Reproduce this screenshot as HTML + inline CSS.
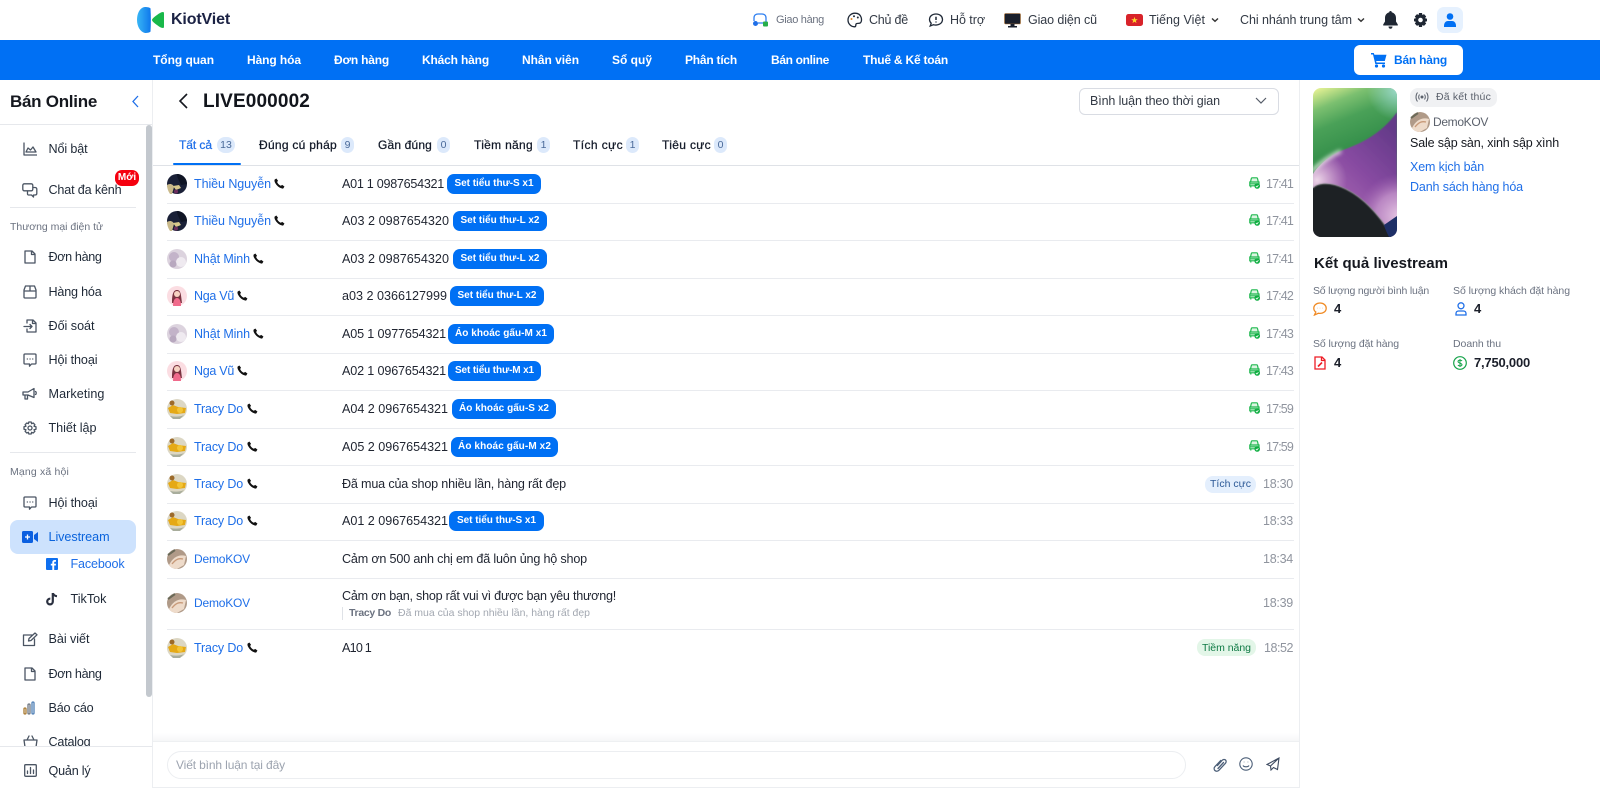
<!DOCTYPE html>
<html lang="vi"><head><meta charset="utf-8"><title>KiotViet</title>
<style>
*{box-sizing:border-box}
html,body{margin:0;padding:0;width:1600px;height:788px;overflow:hidden;background:#fff}
body{position:relative;font-family:"Liberation Sans","Noto Sans CJK SC",sans-serif;color:#1b1f2a}
.t{position:absolute;height:20px;line-height:20px;white-space:nowrap;font-size:13px}
.a{position:absolute}
.m{-webkit-text-stroke:.25px currentColor}
.b{font-weight:bold}
.n{color:#fff;font-weight:bold;font-size:12px;top:50px}
.h{color:#333a45;top:10px;font-size:12.5px}
.s{font-size:12.6px;color:#1f2937}
.g{font-size:10.5px;color:#6b7280}
.i{position:absolute;fill:none;stroke:#4b5563;stroke-width:1.3;stroke-linecap:round;stroke-linejoin:round}
.tb{top:135px;font-size:12px;color:#111827}
.bd{position:absolute;top:137px;height:16px;border-radius:8px;background:#dce9fb;color:#4a6a99;font-size:10.5px;line-height:16px;text-align:center}
.r{position:absolute;left:0;top:0;width:1299px;height:20px}
.l{position:absolute;left:167px;width:1127px;height:1px;background:#e9ebef}
.nm{left:194px;color:#1f6fe8;font-size:12.5px}
.dk{font-size:12px}
.tx{left:342px;color:#1f2430;font-size:12.6px}
.tm{left:1266px;color:#8f949e;font-size:12.5px}
.ch{position:absolute;top:0;height:20px;background:#0070f4;border-radius:7px;color:#fff;font-weight:bold;font-size:10px;line-height:20px;text-align:center;white-space:nowrap}
.ch span{display:inline-block}
.lb{font-size:10.5px;color:#6b7280}
.v{font-size:13px;font-weight:bold;color:#1b1f2a}
</style></head><body>
<svg width="0" height="0" style="position:absolute"><defs>
<symbol id="ph" viewBox="0 0 12 12"><path fill="#111" d="M2.600.6 4.400 3 3.400 4.400C4 6 5.800 7.900 7.500 8.500L8.900 7.500 11.400 9.300 10.300 11.200C9.700 11.700 8.700 11.600 7.600 11.100 4.500 9.800 2 7.200.8 4.300.4 3.200.4 2.300.8 1.700Z"/></symbol>
<symbol id="car" viewBox="0 0 11 12"><path fill="#dcf5e2" stroke="#1fb84f" stroke-width="1.200" d="M1.500 5 2.300 1.500C2.400 1 2.800.8 3.200.8H7.600C8 .8 8.400 1 8.500 1.500L9.300 5M.8 5H10V8.800H.8ZM1.800 9V10.500M.9 6.800H9.900"/><circle cx="8.200" cy="9" r="2.800" fill="#0fae42"/><path d="M6.900 9 7.900 10 9.400 8.200" stroke="#fff" stroke-width=".8" fill="none"/></symbol>
<symbol id="av1" viewBox="0 0 20 20"><circle cx="10" cy="10" r="10" fill="#1a2037"/><path d="M0 11C3 9 6 10 7 13L5 20H3C1 17 0 14 0 11Z" fill="#c9b98a"/><path d="M6 12 12 11 14 14 9 16Z" fill="#d8c98c"/><circle cx="9" cy="17.500" r="2" fill="#6b2d5c"/><path d="M10 0C15 0 20 4 20 10L14 11C12 6 10 4 10 0Z" fill="#0f1424"/></symbol>
<symbol id="av2" viewBox="0 0 20 20"><circle cx="10" cy="10" r="10" fill="#dcd3de"/><circle cx="7" cy="8" r="5" fill="#c3b3c9"/><circle cx="14" cy="13" r="5" fill="#efeaf0"/><circle cx="6" cy="15" r="3.500" fill="#b8a8bf"/></symbol>
<symbol id="av3" viewBox="0 0 20 20"><circle cx="10" cy="10" r="10" fill="#fbdde2"/><path d="M5 17C5 9 6 4 10 4S14 9 15 17Z" fill="#7a3340"/><circle cx="10" cy="8" r="3" fill="#f7d2c2"/><path d="M6 20C6 14 8 12 10 12S14 14 14 20Z" fill="#f06a8b"/></symbol>
<symbol id="av4" viewBox="0 0 20 20"><circle cx="10" cy="10" r="10" fill="#dcd7c4"/><path d="M1 9 6 6 11 8 19 9 18 14 10 15 3 14Z" fill="#e5a916"/><circle cx="13" cy="11" r="3" fill="#f3c536"/><circle cx="5" cy="4" r="2.500" fill="#9c6a2a"/><path d="M3 17C8 18 13 18 17 16L13 20H6Z" fill="#a8ad9c"/></symbol>
<symbol id="av5" viewBox="0 0 20 20"><circle cx="10" cy="10" r="10" fill="#b09a88"/><path d="M2 16C6 8 12 5 19 7L17 16 10 20C7 20 4 19 2 16Z" fill="#eedbca"/><path d="M5 15C9 10 12 9 16 10" stroke="#c89a79" stroke-width="1.400" fill="none"/><path d="M1 6 8 1" stroke="#6b6a58" stroke-width="2"/></symbol>
</defs></svg>

<!-- header -->
<svg class="a" style="left:137px;top:7px" width="27" height="26" viewBox="0 0 27 26"><defs><linearGradient id="lb" x1="0" x2="1"><stop offset="0" stop-color="#39b6f5"/><stop offset="1" stop-color="#0f78ec"/></linearGradient></defs><path fill="url(#lb)" d="M8 0C10.500 0 13 .5 13.500 1.500 14 9 14 17 13.500 24.500 13 25.500 10.500 26 8 26 3 25 0 19 0 13 0 6 3 .5 8 0Z"/><path fill="#19b84a" d="M15 13C15 12 17 10 20 8 22 6.500 24 5 26 5 27 5 27 6 27 7V19C27 20 27 21 26 21 24 21 22 19.500 20 18 17 16 15 14 15 13Z"/></svg>
<div class="t b" style="left:171px;top:10px;font-size:16px;color:#1b2244" w="59">KiotViet</div>

<svg class="a" style="left:752px;top:12px" width="17" height="16" viewBox="0 0 17 16" fill="none"><path d="M2 9V6C2 3 4 2 6 2H10C12 2 14 3 14 6V11H6" stroke="#2f7ff0" stroke-width="1.300"/><circle cx="3.500" cy="11.500" r="2.500" fill="#1f6fe8"/><rect x="11" y="9.500" width="5" height="5" rx="1" fill="#27ae4a"/></svg>
<div class="t" style="left:776px;top:10px;font-size:11px;color:#6b7280" w="48">Giao hàng</div>
<svg class="a" style="left:847px;top:12px" width="16" height="16" viewBox="0 0 16 16" fill="none" stroke="#1f2937" stroke-width="1.300"><path d="M8 1.200C4 1.200 1 4.200 1 8S4 14.800 7.500 14.800C9.500 14.800 8.500 12.800 9 12 9.700 10.800 11.800 12 13.500 10.800 15.500 9 15 1.200 8 1.200Z"/><circle cx="4.500" cy="7" r="1" fill="#e08a2a" stroke="none"/><circle cx="7" cy="4.300" r="1" fill="#1f2937" stroke="none"/><circle cx="10.800" cy="5.500" r="1" fill="#1f2937" stroke="none"/></svg>
<div class="t h" style="left:869px" w="39">Chủ đề</div>
<svg class="a" style="left:928px;top:12px" width="16" height="16" viewBox="0 0 16 16" fill="none" stroke="#1f2937" stroke-width="1.300"><path d="M8 2C4 2 1.500 4.500 1.500 7.500 1.500 9 2.200 10.300 3.200 11.200L2.200 14 5.500 12.700C10 14 14.500 11.500 14.500 7.500 14.500 4.500 12 2 8 2Z"/><path d="M8 4.800V8M8 9.500V10.500" stroke-width="1.500"/></svg>
<div class="t h" style="left:950px" w="35">Hỗ trợ</div>
<svg class="a" style="left:1004px;top:13px" width="17" height="15" viewBox="0 0 17 15"><rect x=".5" y=".5" width="16" height="10.500" rx="1" fill="#1a1f2b" stroke="#b5793a" stroke-width=".6"/><rect x="6.500" y="11" width="4" height="2.500" fill="#1a1f2b"/><rect x="4" y="13" width="9" height="1.500" fill="#1a1f2b"/></svg>
<div class="t h" style="left:1028px" w="69">Giao diện cũ</div>
<svg class="a" style="left:1126px;top:14px" width="17" height="12" viewBox="0 0 17 12"><rect width="17" height="12" rx="2.500" fill="#d8232a"/><path fill="#ffd92e" d="M8.500 2.800 9.300 5.200H11.800L9.800 6.700 10.500 9.100 8.500 7.600 6.500 9.100 7.200 6.700 5.200 5.200H7.700Z"/></svg>
<div class="t h" style="left:1149px" w="56">Tiếng Việt</div>
<svg class="a" style="left:1211px;top:17px" width="8" height="6" viewBox="0 0 8 6" fill="none" stroke="#333" stroke-width="1.400"><path d="M1 1.500 4 4.300 7 1.500"/></svg>
<div class="t h" style="left:1240px" w="112">Chi nhánh trung tâm</div>
<svg class="a" style="left:1357px;top:17px" width="8" height="6" viewBox="0 0 8 6" fill="none" stroke="#333" stroke-width="1.400"><path d="M1 1.500 4 4.300 7 1.500"/></svg>
<svg class="a" style="left:1383px;top:11px" width="15" height="18" viewBox="0 0 15 18"><path fill="#1f2733" d="M7.500 0C8.300 0 8.800.6 8.800 1.400 11.500 2 13 4.300 13 7V10.500L14.800 13.500V14.500H.2V13.500L2 10.500V7C2 4.300 3.500 2 6.200 1.400 6.200.6 6.700 0 7.500 0ZM5.500 15.500H9.500C9.500 17 8.500 17.800 7.500 17.800S5.500 17 5.500 15.500Z"/></svg>
<svg class="a" style="left:1414px;top:13px" width="13" height="14" viewBox="0 0 13 14"><path fill="#1f2733" fill-rule="evenodd" d="M5 0H8L8.400 2 10 1.100 12.200 3.500 11 5.100 13 5.700V8.300L11 8.900 12.200 10.500 10 12.900 8.400 12 8 14H5L4.600 12 3 12.900.8 10.500 2 8.900 0 8.300V5.700L2 5.100.8 3.500 3 1.100 4.600 2ZM6.500 4.700A2.300 2.300 0 1 0 6.500 9.300 2.300 2.300 0 1 0 6.500 4.700Z"/></svg>
<div class="a" style="left:1437px;top:7px;width:26px;height:26px;border-radius:7px;background:#e6f1fe"></div>
<svg class="a" style="left:1444px;top:13px" width="12" height="14" viewBox="0 0 12 14"><circle cx="6" cy="3.500" r="3.300" fill="#0070f4"/><path fill="#0070f4" d="M0 13C0 9.500 2 8 4 8H8C10 8 12 9.500 12 13V14H0Z"/></svg>

<!-- nav -->
<div class="a" style="left:0;top:40px;width:1600px;height:40px;background:#0070f4"></div>
<div class="t n" style="left:153px" w="61">Tổng quan</div>
<div class="t n" style="left:247px" w="54">Hàng hóa</div>
<div class="t n" style="left:334px" w="55">Đơn hàng</div>
<div class="t n" style="left:422px" w="67">Khách hàng</div>
<div class="t n" style="left:522px" w="57">Nhân viên</div>
<div class="t n" style="left:612px" w="40">Sổ quỹ</div>
<div class="t n" style="left:685px" w="52">Phân tích</div>
<div class="t n" style="left:771px" w="58">Bán online</div>
<div class="t n" style="left:863px" w="85">Thuế &amp; Kế toán</div>
<div class="a" style="left:1354px;top:45px;width:109px;height:30px;background:#fff;border-radius:6px"></div>
<svg class="a" style="left:1371px;top:53px" width="16" height="15" viewBox="0 0 16 15"><path fill="#0070f4" d="M0 0H2.800L3.400 1.800H15.500L13.800 8H5.200L5.500 9.500H14V11H4.300L2 1.500H0Z"/><circle cx="5.500" cy="13" r="1.600" fill="#0070f4"/><circle cx="12.500" cy="13" r="1.600" fill="#0070f4"/></svg>
<div class="t b" style="left:1394px;top:50px;font-size:12px;color:#0070f4" w="53">Bán hàng</div>

<!-- sidebar -->
<div class="t b" style="left:10px;top:92px;font-size:17px;color:#15181f" w="87">Bán Online</div>
<svg class="a" style="left:131px;top:95px" width="9" height="13" viewBox="0 0 9 13" fill="none" stroke="#1f6fe8" stroke-width="1.300"><path d="M7 1 2 6.500 7 12"/></svg>
<div class="a" style="left:0;top:124px;width:152px;height:1px;background:#e6e8ec"></div>
<div class="a" style="left:152px;top:80px;width:1px;height:708px;background:#eceef1"></div>
<div class="a" style="left:146px;top:125px;width:6px;height:572px;background:#c3c8ce;border-radius:3px"></div>

<svg class="i" style="left:23px;top:142px" width="14" height="14" viewBox="0 0 14 14"><path d="M1 1V13H14M3 10 5 6 7.500 8 10 5 13 10Z"/></svg>
<div class="t s" style="left:48.500px;top:139px" w="39">Nổi bật</div>
<svg class="i" style="left:22px;top:183px" width="16" height="15" viewBox="0 0 16 15"><rect x=".8" y=".8" width="10" height="7" rx="1.500"/><path d="M5.500 8V11C5.500 11.500 6 12 6.500 12H9.500L11.500 14V12H13C14 12 14.800 11.500 14.800 10.500V6C14.800 5 14 4.500 13 4.500H11"/></svg>
<div class="t s" style="left:48.500px;top:180px" w="73">Chat đa kênh</div>
<div class="a" style="left:115px;top:170px;width:24px;height:16px;border-radius:7px;background:#f5000f;color:#fff;font-size:10px;font-weight:bold;line-height:15px;text-align:center">Mới</div>
<div class="a" style="left:10px;top:207px;width:126px;height:1px;background:#e6e8ec"></div>
<div class="t g" style="left:10px;top:217px" w="93">Thương mại điện tử</div>
<svg class="i" style="left:24px;top:250px" width="12" height="14" viewBox="0 0 12 14"><path d="M1 1H8L11 4V13H1ZM7.500 1V4.500H11"/></svg>
<div class="t s" style="left:48.500px;top:247px" w="53">Đơn hàng</div>
<svg class="i" style="left:23px;top:285px" width="14" height="14" viewBox="0 0 14 14"><path d="M1 5V12C1 12.800 1.500 13 2 13H12C12.500 13 13 12.800 13 12V5L11.500 1H2.500ZM1 6H13M7 1V6"/></svg>
<div class="t s" style="left:48.500px;top:282px" w="53">Hàng hóa</div>
<svg class="i" style="left:23px;top:319px" width="15" height="14" viewBox="0 0 15 14"><path d="M4 4V1H10L13 4V13H4V10M9.500 1V4.500H13M1 7.500H9M7 5.500 9 7.500 7 9.500"/></svg>
<div class="t s" style="left:48.500px;top:316px" w="46">Đối soát</div>
<svg class="i" style="left:23px;top:353px" width="14" height="14" viewBox="0 0 14 14"><path d="M2 1H12C12.600 1 13 1.400 13 2V10C13 10.600 12.600 11 12 11H8.500L6.500 13.200V11H2C1.400 11 1 10.600 1 10V2C1 1.400 1.400 1 2 1ZM4.300 6H4.400M7 6H7.100M9.700 6H9.800"/></svg>
<div class="t s" style="left:48.500px;top:350px" w="49">Hội thoại</div>
<svg class="i" style="left:22px;top:387px" width="16" height="14" viewBox="0 0 16 14"><path d="M1 5H6L12 1.500V10.500L6 8H1ZM3 8V12H5.500V8.500M13.500 4.500C14.500 5 14.500 7 13.500 7.500"/></svg>
<div class="t s" style="left:48.500px;top:384px" w="56">Marketing</div>
<svg class="i" style="left:23px;top:421px" width="14" height="14" viewBox="0 0 14 14"><circle cx="7" cy="7" r="2"/><path d="M5.800 1H8.200L8.600 2.700 10.200 2 11.900 3.700 11 5.200 13 5.800V8.200L11 8.800 11.900 10.300 10.200 12 8.600 11.300 8.200 13H5.800L5.400 11.300 3.800 12 2.100 10.300 3 8.800 1 8.200V5.800L3 5.200 2.100 3.700 3.800 2 5.400 2.700Z"/></svg>
<div class="t s" style="left:48.500px;top:418px" w="48">Thiết lập</div>
<div class="a" style="left:10px;top:452px;width:126px;height:1px;background:#e6e8ec"></div>
<div class="t g" style="left:10px;top:462px" w="59">Mạng xã hội</div>
<svg class="i" style="left:23px;top:496px" width="14" height="14" viewBox="0 0 14 14"><path d="M2 1H12C12.600 1 13 1.400 13 2V10C13 10.600 12.600 11 12 11H8.500L6.500 13.200V11H2C1.400 11 1 10.600 1 10V2C1 1.400 1.400 1 2 1ZM4.300 6H4.400M7 6H7.100M9.700 6H9.800"/></svg>
<div class="t s" style="left:48.500px;top:493px" w="49">Hội thoại</div>
<div class="a" style="left:10px;top:520px;width:126px;height:34px;background:#cde2fd;border-radius:8px"></div>
<svg class="a" style="left:22px;top:531px" width="16" height="12" viewBox="0 0 16 12"><rect width="11" height="12" rx="1.500" fill="#0b5fe0"/><path d="M5.500 3.500V8.500M3 6H8" stroke="#fff" stroke-width="1.300"/><path d="M12 4 16 1V11L12 8Z" fill="#0b5fe0"/></svg>
<div class="t s" style="left:48.500px;top:527px;color:#0a63dc" w="61">Livestream</div>
<svg class="a" style="left:46px;top:558px" width="12" height="12" viewBox="0 0 12 12"><rect width="12" height="12" rx="1" fill="#0f6fef"/><path fill="#fff" d="M8.200 12V7.500H9.800L10 5.700H8.200V4.600C8.200 4 8.500 3.700 9.100 3.700H10V2.100C9.600 2 9.100 2 8.700 2 7.200 2 6.300 2.900 6.300 4.400V5.700H4.800V7.500H6.300V12Z"/></svg>
<div class="t s" style="left:70.500px;top:554px;color:#1f6fe8" w="54">Facebook</div>
<svg class="a" style="left:46px;top:592px" width="12" height="14" viewBox="0 0 12 14" fill="none"><path d="M6.800 1V9.500C6.800 11 5.700 12.400 4 12.400 2.500 12.400 1.200 11.200 1.200 9.500 1.200 8 2.500 6.600 4.300 6.700" stroke="#2b3140" stroke-width="2.200"/><path d="M7 1.200C7.500 3 9 4 11 4.200" stroke="#2b3140" stroke-width="2"/></svg>
<div class="t s" style="left:70.500px;top:589px" w="36">TikTok</div>
<svg class="i" style="left:22px;top:632px" width="16" height="15" viewBox="0 0 16 15"><path d="M10 3H1.500V13.500H12.500V7M6.500 9 7 6.500 13 1 15 2.800 9 8.500Z"/></svg>
<div class="t s" style="left:48.500px;top:629px" w="41">Bài viết</div>
<svg class="i" style="left:24px;top:667px" width="12" height="14" viewBox="0 0 12 14"><path d="M1 1H8L11 4V13H1ZM7.500 1V4.500H11"/></svg>
<div class="t s" style="left:48.500px;top:664px" w="53">Đơn hàng</div>
<svg class="a" style="left:23px;top:701px" width="14" height="14" viewBox="0 0 14 14" fill="none" stroke="#6d7682" stroke-width="1.300"><rect x="1" y="7" width="2" height="6" rx="1" stroke="#a8792f"/><rect x="5" y="3" width="2" height="10" rx="1"/><rect x="9" y="1" width="2" height="12" rx="1" stroke="#4f7fb5"/></svg>
<div class="t s" style="left:48.500px;top:698px" w="45">Báo cáo</div>
<svg class="i" style="left:23px;top:735px" width="15" height="14" viewBox="0 0 15 14"><path d="M1 5H14L13 12H2ZM4 5 6 1M11 5 9 1"/></svg>
<div class="t s" style="left:48.500px;top:732px" w="42">Catalog</div>
<div class="a" style="left:0;top:746px;width:152px;height:42px;background:#fff;border-top:1px solid #e6e8ec"></div>
<svg class="i" style="left:24px;top:764px" width="13" height="13" viewBox="0 0 13 13"><rect x=".7" y=".7" width="11.600" height="11.600" rx="1"/><path d="M3.500 9.500V7M6.500 9.500V3.500M9.500 9.500V6"/></svg>
<div class="t s" style="left:48.500px;top:761px" w="42">Quản lý</div>

<!-- title -->
<svg class="a" style="left:178px;top:93px" width="11" height="16" viewBox="0 0 11 16" fill="none" stroke="#15181f" stroke-width="1.600"><path d="M9 1 2 8 9 15"/></svg>
<div class="t b" style="left:203px;top:92px;font-size:19px;color:#12151c" w="107">LIVE000002</div>
<div class="a" style="left:1079px;top:88px;width:200px;height:27px;border:1px solid #d9dce3;border-radius:6px"></div>
<div class="t" style="left:1090px;top:91px;font-size:12.500px;color:#333a45" w="130">Bình luận theo thời gian</div>
<svg class="a" style="left:1255px;top:97px" width="12" height="8" viewBox="0 0 12 8" fill="none" stroke="#555c68" stroke-width="1.200"><path d="M1 1 6 6 11 1"/></svg>

<!-- tabs -->
<div class="t tb m" style="left:179px;color:#1f6fe8" w="33">Tất cả</div><div class="bd" style="left:217px;width:18px">13</div>
<div class="t tb m" style="left:259px" w="78">Đúng cú pháp</div><div class="bd" style="left:341px;width:13px">9</div>
<div class="t tb m" style="left:378px" w="54">Gần đúng</div><div class="bd" style="left:437px;width:13px">0</div>
<div class="t tb m" style="left:474px" w="59">Tiềm năng</div><div class="bd" style="left:537px;width:13px">1</div>
<div class="t tb m" style="left:573px" w="50">Tích cực</div><div class="bd" style="left:626px;width:13px">1</div>
<div class="t tb m" style="left:662px" w="49">Tiêu cực</div><div class="bd" style="left:714px;width:13px">0</div>
<div class="a" style="left:153px;top:165px;width:1146px;height:1px;background:#dfe2e7"></div>
<div class="a" style="left:173px;top:163px;width:68px;height:2px;background:#0070f4;border-radius:1px"></div>

<!-- dividers -->
<div class="l" style="top:203px"></div><div class="l" style="top:240px"></div><div class="l" style="top:278px"></div><div class="l" style="top:315px"></div><div class="l" style="top:353px"></div><div class="l" style="top:390px"></div><div class="l" style="top:428px"></div><div class="l" style="top:465px"></div><div class="l" style="top:503px"></div><div class="l" style="top:540px"></div><div class="l" style="top:578px"></div><div class="l" style="top:629px"></div>

<!-- rows -->
<div class="r" style="top:174px"><svg class="a" style="left:167px" width="20" height="20"><use href="#av1"/></svg><div class="t nm" w="77">Thiều Nguyễn</div><svg class="a" style="left:274px;top:4px" width="11" height="11"><use href="#ph"/></svg><div class="t tx" w="102">A01 1 0987654321</div><div class="ch" style="left:447px;width:94px"><span w="79">Set tiểu thư-S x1</span></div><svg class="a" style="left:1249px;top:3px" width="11" height="12"><use href="#car"/></svg><div class="t tm" w="27">17:41</div></div>
<div class="r" style="top:211px"><svg class="a" style="left:167px" width="20" height="20"><use href="#av1"/></svg><div class="t nm" w="77">Thiều Nguyễn</div><svg class="a" style="left:274px;top:4px" width="11" height="11"><use href="#ph"/></svg><div class="t tx" w="107">A03 2 0987654320</div><div class="ch" style="left:453px;width:94px"><span w="79">Set tiểu thư-L x2</span></div><svg class="a" style="left:1249px;top:3px" width="11" height="12"><use href="#car"/></svg><div class="t tm" w="27">17:41</div></div>
<div class="r" style="top:249px"><svg class="a" style="left:167px" width="20" height="20"><use href="#av2"/></svg><div class="t nm" w="56">Nhật Minh</div><svg class="a" style="left:253px;top:4px" width="11" height="11"><use href="#ph"/></svg><div class="t tx" w="107">A03 2 0987654320</div><div class="ch" style="left:453px;width:94px"><span w="79">Set tiểu thư-L x2</span></div><svg class="a" style="left:1249px;top:3px" width="11" height="12"><use href="#car"/></svg><div class="t tm" w="27">17:41</div></div>
<div class="r" style="top:286px"><svg class="a" style="left:167px" width="20" height="20"><use href="#av3"/></svg><div class="t nm" w="40">Nga Vũ</div><svg class="a" style="left:237px;top:4px" width="11" height="11"><use href="#ph"/></svg><div class="t tx" w="105">a03 2 0366127999</div><div class="ch" style="left:450px;width:94px"><span w="79">Set tiểu thư-L x2</span></div><svg class="a" style="left:1249px;top:3px" width="11" height="12"><use href="#car"/></svg><div class="t tm" w="27">17:42</div></div>
<div class="r" style="top:324px"><svg class="a" style="left:167px" width="20" height="20"><use href="#av2"/></svg><div class="t nm" w="56">Nhật Minh</div><svg class="a" style="left:253px;top:4px" width="11" height="11"><use href="#ph"/></svg><div class="t tx" w="104">A05 1 0977654321</div><div class="ch" style="left:448px;width:106px"><span w="92">Áo khoác gấu-M x1</span></div><svg class="a" style="left:1249px;top:3px" width="11" height="12"><use href="#car"/></svg><div class="t tm" w="27">17:43</div></div>
<div class="r" style="top:361px"><svg class="a" style="left:167px" width="20" height="20"><use href="#av3"/></svg><div class="t nm" w="40">Nga Vũ</div><svg class="a" style="left:237px;top:4px" width="11" height="11"><use href="#ph"/></svg><div class="t tx" w="104">A02 1 0967654321</div><div class="ch" style="left:448px;width:93px"><span w="79">Set tiểu thư-M x1</span></div><svg class="a" style="left:1249px;top:3px" width="11" height="12"><use href="#car"/></svg><div class="t tm" w="27">17:43</div></div>
<div class="r" style="top:399px"><svg class="a" style="left:167px" width="20" height="20"><use href="#av4"/></svg><div class="t nm" w="49">Tracy Do</div><svg class="a" style="left:247px;top:4px" width="11" height="11"><use href="#ph"/></svg><div class="t tx" w="106">A04 2 0967654321</div><div class="ch" style="left:452px;width:104px"><span w="90">Áo khoác gấu-S x2</span></div><svg class="a" style="left:1249px;top:3px" width="11" height="12"><use href="#car"/></svg><div class="t tm" w="27">17:59</div></div>
<div class="r" style="top:437px"><svg class="a" style="left:167px" width="20" height="20"><use href="#av4"/></svg><div class="t nm" w="49">Tracy Do</div><svg class="a" style="left:247px;top:4px" width="11" height="11"><use href="#ph"/></svg><div class="t tx" w="106">A05 2 0967654321</div><div class="ch" style="left:451px;width:107px"><span w="93">Áo khoác gấu-M x2</span></div><svg class="a" style="left:1249px;top:3px" width="11" height="12"><use href="#car"/></svg><div class="t tm" w="27">17:59</div></div>
<div class="r" style="top:474px"><svg class="a" style="left:167px" width="20" height="20"><use href="#av4"/></svg><div class="t nm" w="49">Tracy Do</div><svg class="a" style="left:247px;top:4px" width="11" height="11"><use href="#ph"/></svg><div class="t tx" w="224">Đã mua của shop nhiều lần, hàng rất đẹp</div><div class="a" style="left:1205px;top:2px;width:51px;height:17px;background:#e4effd;border-radius:8px"></div><div class="t" style="left:1210px;font-size:10.500px;color:#2d5a97" w="41">Tích cực</div><div class="t tm" style="left:1263px" w="30">18:30</div></div>
<div class="r" style="top:511px"><svg class="a" style="left:167px" width="20" height="20"><use href="#av4"/></svg><div class="t nm" w="49">Tracy Do</div><svg class="a" style="left:247px;top:4px" width="11" height="11"><use href="#ph"/></svg><div class="t tx" w="106">A01 2 0967654321</div><div class="ch" style="left:449px;width:95px"><span w="79">Set tiểu thư-S x1</span></div><div class="t tm" style="left:1263px" w="30">18:33</div></div>
<div class="r" style="top:549px"><svg class="a" style="left:167px" width="20" height="20"><use href="#av5"/></svg><div class="t nm dk" w="56">DemoKOV</div><div class="t tx" w="245">Cảm ơn 500 anh chị em đã luôn ủng hộ shop</div><div class="t tm" style="left:1263px" w="30">18:34</div></div>
<div class="r" style="top:593px"><svg class="a" style="left:167px" width="20" height="20"><use href="#av5"/></svg><div class="t nm dk" w="56">DemoKOV</div><div class="t tm" style="left:1263px" w="30">18:39</div></div>
<div class="t tx" style="top:586px" w="274">Cảm ơn bạn, shop rất vui vì được bạn yêu thương!</div>
<div class="a" style="left:342px;top:607px;width:1px;height:13px;background:#dfe2e7"></div>
<div class="t b" style="left:349px;top:603px;font-size:10.500px;color:#6b7280" w="42">Tracy Do</div>
<div class="t" style="left:398px;top:603px;font-size:10.500px;color:#a3a8b1" w="192">Đã mua của shop nhiều lần, hàng rất đẹp</div>
<div class="r" style="top:638px"><svg class="a" style="left:167px" width="20" height="20"><use href="#av4"/></svg><div class="t nm" w="49">Tracy Do</div><svg class="a" style="left:247px;top:4px" width="11" height="11"><use href="#ph"/></svg><div class="t tx" w="29">A10 1</div><div class="a" style="left:1197px;top:1px;width:59px;height:17px;background:#e3f6e8;border-radius:8px"></div><div class="t" style="left:1202px;font-size:10.500px;color:#0f7a45" w="49">Tiềm năng</div><div class="t tm" style="left:1264px" w="29">18:52</div></div>

<!-- composer -->
<div class="a" style="left:153px;top:733px;width:1146px;height:8px;background:linear-gradient(#fff,#f6f7f8)"></div>
<div class="a" style="left:153px;top:741px;width:1146px;height:1px;background:#eef0f2"></div>
<div class="a" style="left:167px;top:751px;width:1019px;height:28px;border:1px solid #eceef1;border-radius:14px"></div>
<div class="t" style="left:176px;top:755px;font-size:12px;color:#9ca3af" w="109">Viết bình luận tại đây</div>
<svg class="a" style="left:1213px;top:758px" width="14" height="14" viewBox="0 0 14 14" fill="none" stroke="#4c5f78" stroke-width="1.300" stroke-linecap="round"><path d="M4.500 7.500 9 2.500C10 1.300 11.600 1.200 12.500 2 13.400 2.900 13.300 4.300 12.300 5.400L6 12.200C4.700 13.500 2.900 13.500 1.900 12.500 .9 11.500 .9 9.800 2 8.600L7.800 2.500"/><path d="M5 10.500 10.500 4.500"/></svg>
<svg class="a" style="left:1239px;top:757px" width="14" height="14" viewBox="0 0 14 14" fill="none" stroke="#4c5f78" stroke-width="1.100"><circle cx="7" cy="7" r="6.200"/><path d="M4 8.500C5 10.300 9 10.300 10 8.500M4.800 5H5.300M8.700 5H9.200"/></svg>
<svg class="a" style="left:1266px;top:757px" width="14" height="14" viewBox="0 0 14 14" fill="none" stroke="#3d4a60" stroke-width="1.100"><path d="M13 1 1 7.500 4.500 9 5 13 7.500 10.500 11.500 12.500ZM13 1 4.500 9"/></svg>
<div class="a" style="left:153px;top:787px;width:1146px;height:1px;background:#eceef1"></div>

<!-- right panel -->
<div class="a" style="left:1299px;top:80px;width:1px;height:708px;background:#eceef1"></div>
<svg class="a" style="left:1313px;top:88px" width="84" height="149" viewBox="0 0 84 149"><defs>
<clipPath id="rc"><rect width="84" height="149" rx="8"/></clipPath>
<clipPath id="pc"><path d="M84 24C70 44 50 55 30 62 15 68 5 78 0 86V149H84Z"/></clipPath>
<linearGradient id="gr" gradientUnits="userSpaceOnUse" x1="5" y1="0" x2="30" y2="60"><stop offset="0" stop-color="#e6f294"/><stop offset=".3" stop-color="#7cc070"/><stop offset=".6" stop-color="#4aa158"/><stop offset="1" stop-color="#37914c"/></linearGradient>
<radialGradient id="tl" gradientUnits="userSpaceOnUse" cx="84" cy="2" r="30"><stop offset="0" stop-color="#9ad8c8"/><stop offset="1" stop-color="#9ad8c8" stop-opacity="0"/></radialGradient>
<linearGradient id="pu" gradientUnits="userSpaceOnUse" x1="10" y1="110" x2="80" y2="40"><stop offset="0" stop-color="#a866b2"/><stop offset=".5" stop-color="#8549a0"/><stop offset="1" stop-color="#633a88"/></linearGradient>
<radialGradient id="pk" gradientUnits="userSpaceOnUse" cx="86" cy="128" r="42"><stop offset="0" stop-color="#e6c6e3"/><stop offset=".55" stop-color="#c595cb" stop-opacity=".8"/><stop offset="1" stop-color="#a568b2" stop-opacity="0"/></radialGradient>
<radialGradient id="pl" gradientUnits="userSpaceOnUse" cx="4" cy="92" r="30"><stop offset="0" stop-color="#ecd6e8"/><stop offset="1" stop-color="#dcb8da" stop-opacity="0"/></radialGradient>
<filter id="bl" x="-30%" y="-30%" width="160%" height="160%"><feGaussianBlur stdDeviation="2"/></filter><filter id="bs" x="-10%" y="-10%" width="120%" height="120%"><feGaussianBlur stdDeviation=".6"/></filter>
</defs><g clip-path="url(#rc)"><rect width="84" height="149" fill="url(#gr)"/><rect width="84" height="149" fill="url(#tl)"/>
<path d="M84 24C70 44 50 55 30 62 15 68 5 78 0 86V149H84Z" fill="url(#pu)" filter="url(#bs)"/>
<g clip-path="url(#pc)"><rect width="84" height="149" fill="url(#pk)"/><rect width="84" height="149" fill="url(#pl)"/></g>
<path d="M-2 84C6 76 14 70 28 63" fill="none" stroke="#eef2ea" stroke-width="3" filter="url(#bl)"/>
<path d="M0 100C5 95 14 95 22 97 40 102 55 115 68 132 73 138 76 144 79 149H0Z" fill="#1d2124"/>
<path d="M0 100C5 95 14 95 22 97 40 102 55 115 68 132 73 138 76 144 79 149" fill="none" stroke="#8a8a8e" stroke-width="1" filter="url(#bs)"/>
<path d="M84 128V149H76C74 145 72 141 71 137Z" fill="#1d2f66"/></g></svg>
<div class="a" style="left:1410px;top:88px;width:87px;height:19px;border-radius:8px;background:#f0f1f3"></div>
<svg class="a" style="left:1415px;top:91px" width="14" height="12" viewBox="0 0 14 12" fill="none" stroke="#5b616c" stroke-width="1"><circle cx="7" cy="6" r="1" fill="#5b616c"/><path d="M4.500 3.500C3.500 5 3.500 7 4.500 8.500M9.500 3.500C10.500 5 10.500 7 9.500 8.500M2.500 1.500C.5 4 .5 8 2.500 10.500M11.500 1.500C13.500 4 13.500 8 11.500 10.500"/></svg>
<div class="t" style="left:1436px;top:87px;font-size:10.500px;color:#5b616c" w="55">Đã kết thúc</div>
<svg class="a" style="left:1410px;top:112px" width="20" height="20"><use href="#av5"/></svg>
<div class="t" style="left:1433px;top:112px;font-size:12px;color:#5b616c" w="55">DemoKOV</div>
<div class="t" style="left:1410px;top:133px;font-size:12.500px;color:#15181f" w="149">Sale sập sàn, xinh sập xình</div>
<div class="t" style="left:1410px;top:157px;font-size:12.500px;color:#1f6fe8" w="74">Xem kịch bản</div>
<div class="t" style="left:1410px;top:177px;font-size:12.500px;color:#1f6fe8" w="113">Danh sách hàng hóa</div>
<div class="t b" style="left:1314px;top:254px;font-size:15px;color:#15181f" w="134">Kết quả livestream</div>
<div class="t lb" style="left:1313px;top:281px" w="116">Số lượng người bình luận</div>
<div class="t lb" style="left:1453px;top:281px" w="117">Số lượng khách đặt hàng</div>
<svg class="a" style="left:1313px;top:302px" width="14" height="14" viewBox="0 0 14 14" fill="none" stroke="#f08a24" stroke-width="1.300"><path d="M7 1C3.500 1 .8 3.200.8 6.200.8 7.800 1.600 9.200 2.800 10L1.500 13 5.500 11.200C9.500 12 13.200 9.800 13.200 6.200 13.200 3.200 10.500 1 7 1ZM4.300 6.200H4.500M6.900 6.200H7.100M9.500 6.200H9.700"/></svg>
<div class="t v" style="left:1334px;top:299px" w="7">4</div>
<svg class="a" style="left:1455px;top:302px" width="12" height="14" viewBox="0 0 12 14" fill="none" stroke="#1f6fe8" stroke-width="1.300"><circle cx="6" cy="3.800" r="3"/><path d="M1 13V11.500C1 9.800 2.200 9 3.500 9H8.500C9.800 9 11 9.800 11 11.500V13Z"/></svg>
<div class="t v" style="left:1474px;top:299px" w="7">4</div>
<div class="t lb" style="left:1313px;top:334px" w="86">Số lượng đặt hàng</div>
<div class="t lb" style="left:1453px;top:334px" w="48">Doanh thu</div>
<svg class="a" style="left:1314px;top:356px" width="12" height="14" viewBox="0 0 12 14" fill="none" stroke="#ee1c25" stroke-width="1.300"><path d="M1 1H8L11 4V13H1ZM7.500 1V4.500H11"/><path d="M4 10.500 8 6.500" stroke-width="1.600"/></svg>
<div class="t v" style="left:1334px;top:353px" w="7">4</div>
<svg class="a" style="left:1453px;top:356px" width="14" height="14" viewBox="0 0 14 14" fill="none" stroke="#16a34a" stroke-width="1.200"><circle cx="7" cy="7" r="6.300"/><path d="M9 5C8.500 4 5 3.700 5 5.500S9 7 9 8.800 5.500 10 5 9M7 3V11" stroke-width="1"/></svg>
<div class="t v" style="left:1474px;top:353px" w="56">7,750,000</div>

<script>
document.querySelectorAll('[w]').forEach(function(e){
  var want=parseFloat(e.getAttribute('w'));
  e.style.letterSpacing='0px';
  var have=e.getBoundingClientRect().width,n=e.textContent.length;
  if(n>0)e.style.letterSpacing=((want-have)/n)+'px';
});
</script>
</body></html>
